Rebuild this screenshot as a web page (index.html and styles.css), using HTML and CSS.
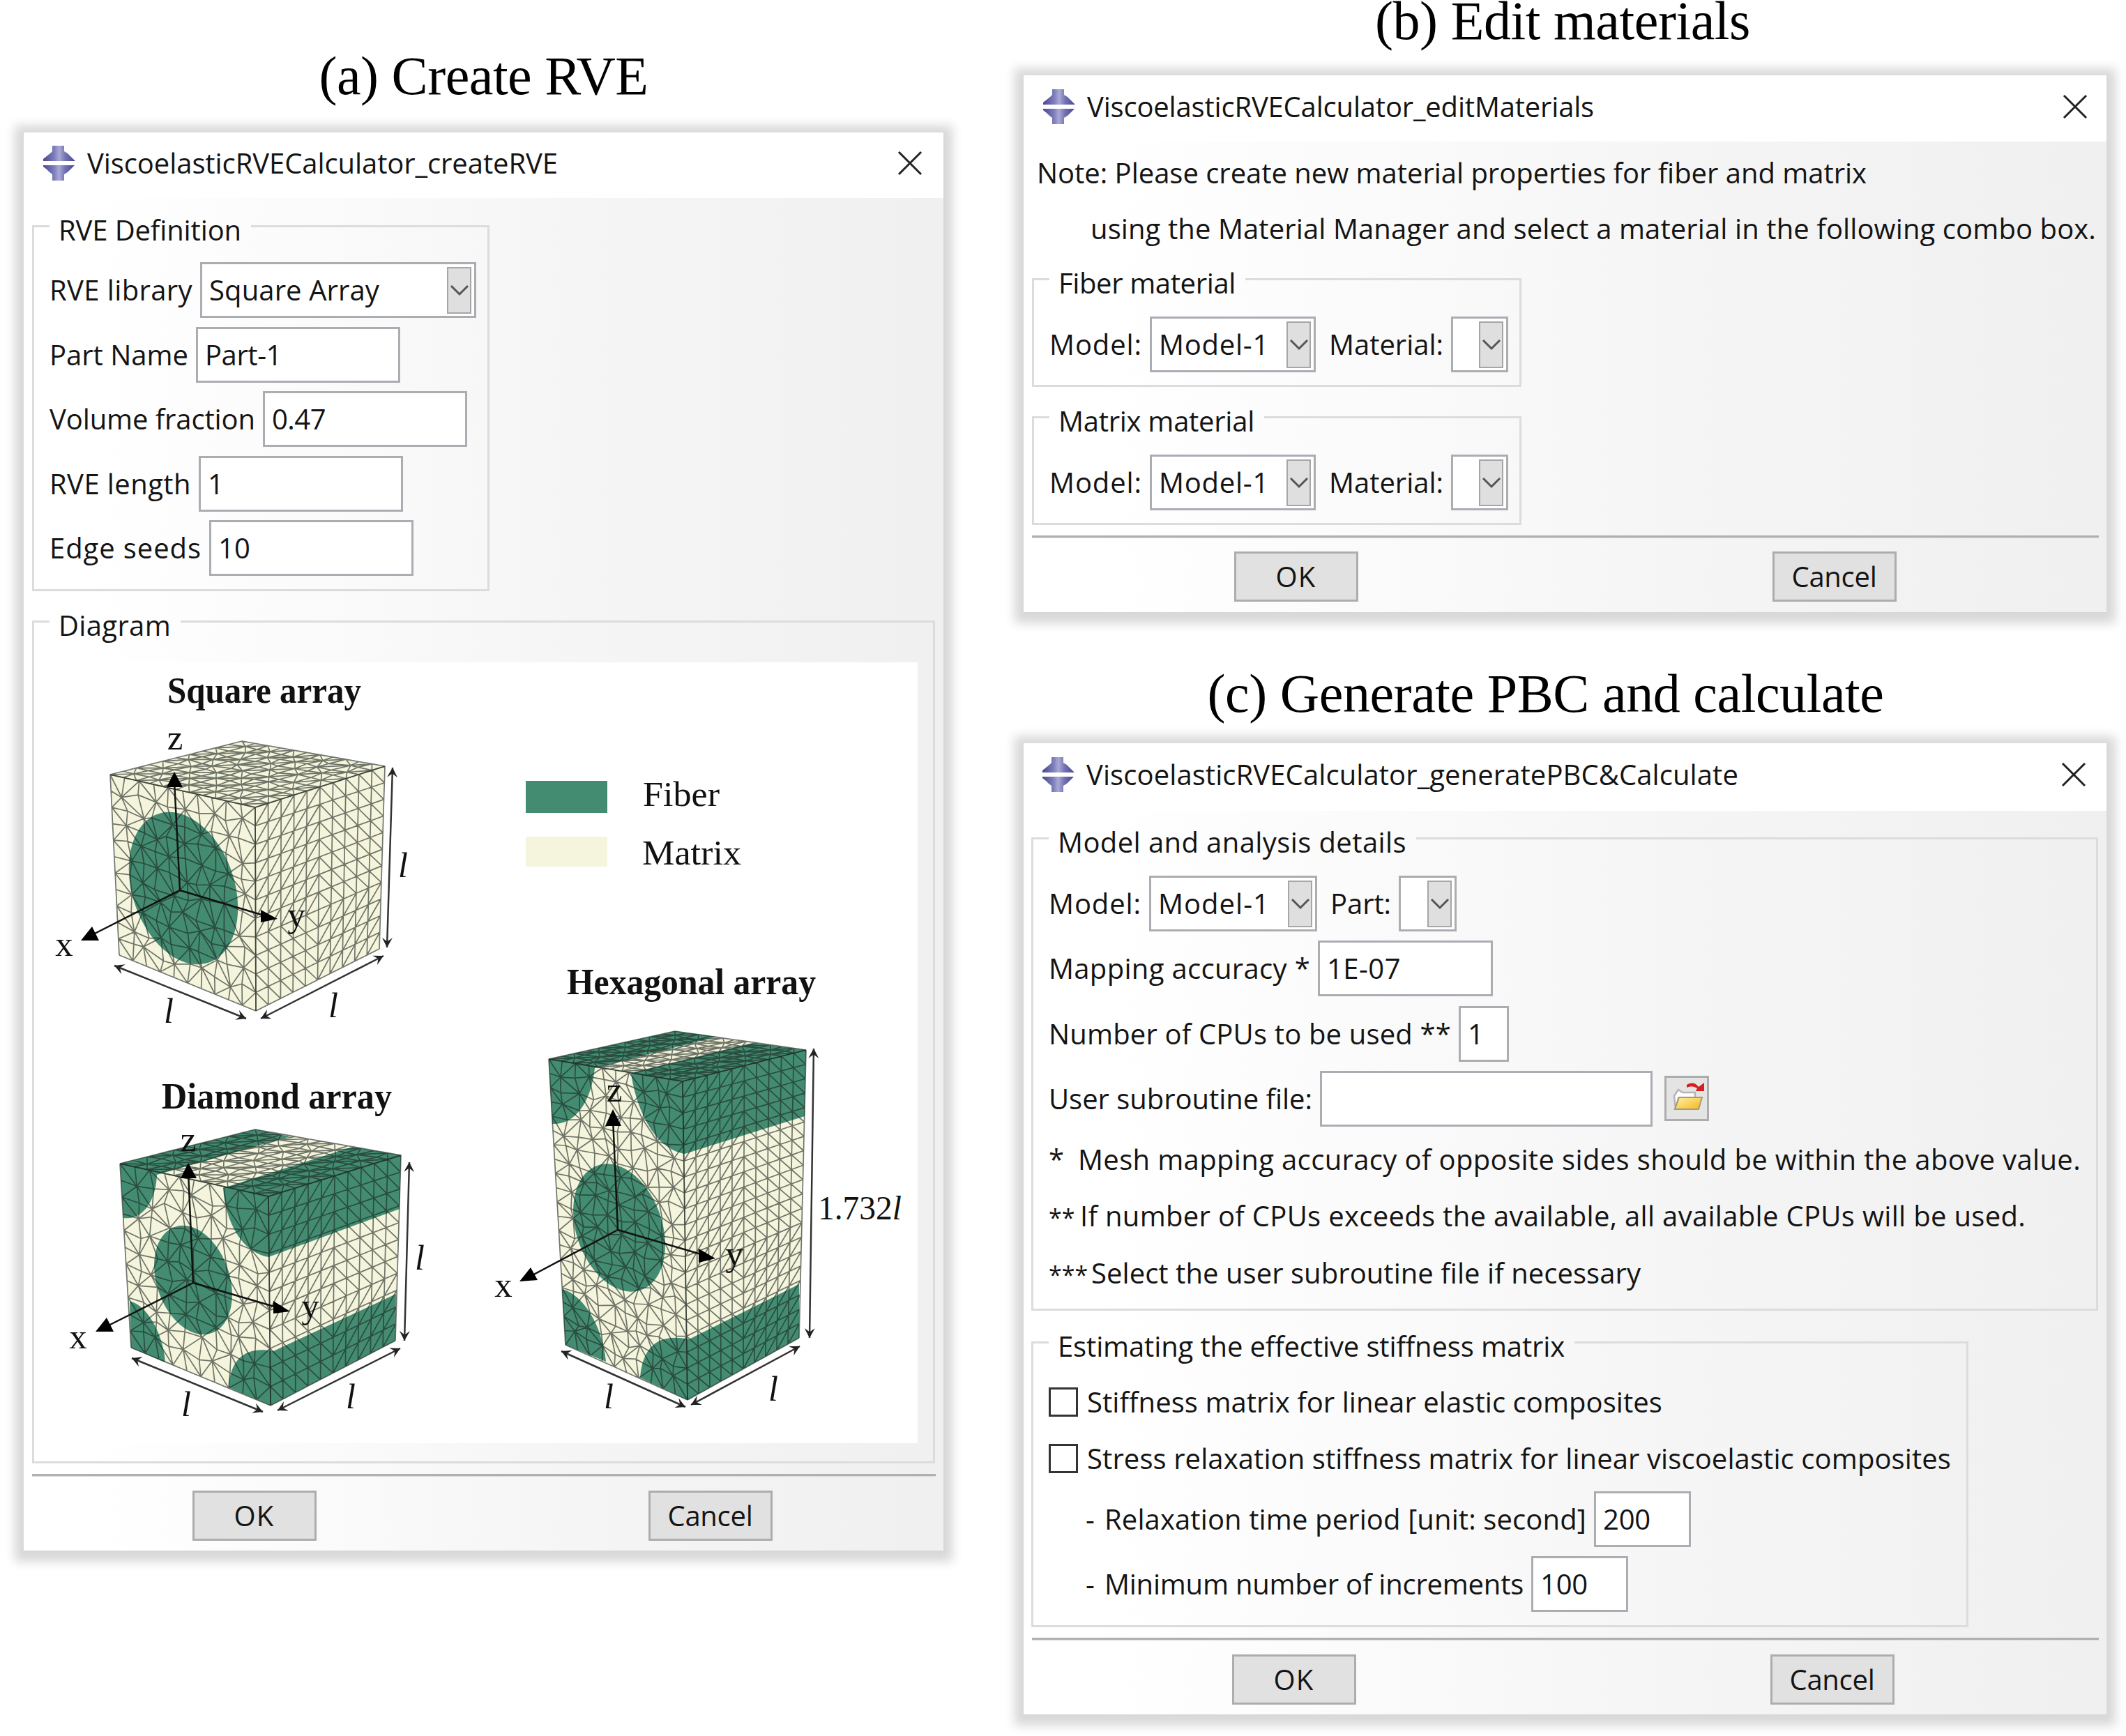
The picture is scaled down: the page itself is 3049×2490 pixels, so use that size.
FILE: index.html
```
<!DOCTYPE html>
<html lang="en">
<head>
<meta charset="utf-8">
<title>Viscoelastic RVE Calculator</title>
<link rel="stylesheet" href="styles.css">
</head>
<body>
<svg class="defs" width="0" height="0" aria-hidden="true">
  <defs>
    <linearGradient id="plum" x1="0" x2="1" y1="0" y2="0">
      <stop offset="0" stop-color="#4a4792"/><stop offset=".35" stop-color="#7f7fbc"/><stop offset=".5" stop-color="#a9a9d6"/><stop offset=".7" stop-color="#7271b2"/><stop offset="1" stop-color="#4a4792"/>
    </linearGradient>
    <linearGradient id="gold" x1="0" x2="1" y1="0" y2="1">
      <stop offset="0" stop-color="#fff0a8"/><stop offset="1" stop-color="#f2b81c"/>
    </linearGradient>
    <symbol id="logo" viewBox="0 0 48 50">
      <path d="M15 0h17v8l5 3 5 5 6 6H2v-3l5-4 5-4 3-3z" fill="url(#plum)"/>
      <path d="M2 28h45l-6 6-4 4-5 3v9H15v-9l-4-3-4-4-5-4z" fill="url(#plum)"/>
    </symbol>
    <symbol id="close" viewBox="0 0 36 36"><path d="M2 2l32 32M34 2L2 34" stroke="#222" stroke-width="3" fill="none"/></symbol>
    <symbol id="chev" viewBox="0 0 28 18"><path d="M2 3l12 12L26 3" stroke="#555" stroke-width="3" fill="none"/></symbol>
    <marker id="tip" viewBox="0 0 14 14" refX="13" refY="7" markerWidth="15" markerHeight="15" markerUnits="userSpaceOnUse" orient="auto-start-reverse"><path d="M0 0l13 7-13 7 5-7z" fill="#222"/></marker>
  </defs>
</svg>
<main class="page">
  <section class="col col-left">
    <h2 class="caption caption-a"><span data-w="472">(a) Create RVE</span></h2>
    <div class="dialog dialog-a">
      <header class="titlebar">
        <svg class="logo"><use href="#logo"/></svg><span class="title" data-w="675">ViscoelasticRVECalculator_createRVE</span>
        <svg class="close"><use href="#close"/></svg>
      </header>
      <fieldset class="group group-def">
        <legend><span data-w="262">RVE Definition</span></legend>
        <div class="row"><span data-w="205">RVE library</span><div class="combo combo-lib"><span data-w="244">Square Array</span><i class="drop"><svg><use href="#chev"/></svg></i></div></div>
        <div class="row"><span data-w="199">Part Name</span><div class="field w293"><span data-w="110">Part-1</span></div></div>
        <div class="row"><span data-w="295">Volume fraction</span><div class="field w293"><span data-w="77">0.47</span></div></div>
        <div class="row"><span data-w="203">RVE length</span><div class="field w293"><span>1</span></div></div>
        <div class="row"><span data-w="218">Edge seeds</span><div class="field w293"><span data-w="46">10</span></div></div>
      </fieldset>
      <fieldset class="group group-diagram">
        <legend><span data-w="161">Diagram</span></legend>
        <svg class="diagram" viewBox="50 950 1266 1120" width="1266" height="1120">
          <g class="heading">
            <text x="240" y="1008" textLength="278" lengthAdjust="spacingAndGlyphs">Square array</text>
            <text x="232" y="1590" textLength="330" lengthAdjust="spacingAndGlyphs">Diamond array</text>
            <text x="813" y="1426" textLength="357" lengthAdjust="spacingAndGlyphs">Hexagonal array</text>
          </g>
          <rect class="fiber" x="754" y="1120" width="117" height="46"/>
          <rect class="matrix" x="754" y="1200" width="117" height="43"/>
          <g class="key">
            <text x="922" y="1156" textLength="110" lengthAdjust="spacingAndGlyphs">Fiber</text>
            <text x="921" y="1240" textLength="142" lengthAdjust="spacingAndGlyphs">Matrix</text>
          </g>

          <!-- square array -->
          <path class="matrix" d="M158 1111L347 1063L552 1099L544 1361L367 1450L171 1370Z"/>
          <circle class="fiber" r=".387" transform="matrix(202 64 7 275 263 1274)"/>
          <g id="mesh-square" class="mesh"></g>
          <g class="axes">
            <path d="M258 1277L250 1120M258 1277L385 1315M258 1277L130 1342"/>
            <path class="head" d="M250 1107l12 22h-23zM398 1318l-24-13v18zM116 1349l16-20 10 20z"/>
          </g>
          <g class="dims"><path d="M164 1385L353 1461"/><path d="M374 1461L550 1371"/><path d="M563 1101L555 1359"/></g>
          <g class="lab"><text x="251" y="1075">z</text><text x="92" y="1371">x</text><text x="425" y="1329">y</text></g>
          <g class="len"><text x="242" y="1467">l</text><text x="478" y="1459">l</text><text x="578" y="1258">l</text></g>

          <!-- diamond array -->
          <path class="matrix" d="M172 1669L366 1620L575 1657L567 1923L388 2016L188 1933Z"/>
          <path class="fiber" d="M172 1669L366 1620L416 1630L225 1685C224 1720 206 1751 177 1747Z"/>
          <path class="fiber" d="M320 1704L505 1645L575 1657L573 1734L385 1803C345 1796 323 1750 320 1704Z"/>
          <path class="fiber" d="M186 1867C205 1868 233 1905 237 1954L188 1933Z"/>
          <path class="fiber" d="M328 1990C330 1950 352 1930 392 1938L568 1856L567 1923L388 2016Z"/>
          <circle class="fiber" r=".27" transform="matrix(207 65 9 282 277 1836)"/>
          <g id="mesh-diamond" class="mesh"></g>
          <g class="axes">
            <path d="M277 1840L270 1680M277 1840L400 1876M277 1840L152 1903"/>
            <path class="head" d="M270 1668l12 22h-23zM416 1881l-24-15v18zM137 1910l16-20 10 20z"/>
          </g>
          <g class="dims"><path d="M189 1948L377 2025"/><path d="M398 2023L574 1934"/><path d="M587 1667L580 1923"/></g>
          <g class="lab"><text x="270" y="1651">z</text><text x="112" y="1934">x</text><text x="445" y="1890">y</text></g>
          <g class="len"><text x="267" y="2031">l</text><text x="503" y="2020">l</text><text x="602" y="1821">l</text></g>

          <!-- hexagonal array -->
          <path class="matrix" d="M787 1519L968 1479L1156 1506L1146 1919L986 2008L811 1929Z"/>
          <path class="fiber" d="M787 1519L968 1479L1028 1487L853 1532C848 1580 825 1614 792 1612Z"/>
          <path class="fiber" d="M905 1539L1079 1496L1156 1506L1154 1601L982 1655C938 1648 912 1590 905 1539Z"/>
          <path class="fiber" d="M806 1849C835 1856 864 1900 869 1953L811 1929Z"/>
          <path class="fiber" d="M918 1976C922 1930 945 1912 988 1921L1146 1842L1146 1919L986 2008Z"/>
          <circle class="fiber" r=".358" transform="matrix(184 56 8.7 250 888 1761)"/>
          <g id="mesh-hex" class="mesh"></g>
          <g class="axes">
            <path d="M886 1764L879 1604M886 1764L1012 1801M886 1764L760 1831"/>
            <path class="head" d="M879 1591l12 24h-23zM1026 1805l-24-14v20zM745 1838l16-20 10 18z"/>
          </g>
          <g class="dims"><path d="M805 1938L983 2018"/><path d="M991 2015L1147 1931"/><path d="M1167 1504L1161 1919"/></g>
          <g class="lab"><text x="881" y="1580">z</text><text x="722" y="1860">x</text><text x="1053" y="1815">y</text></g>
          <g class="len"><text x="873" y="2020">l</text><text x="1109" y="2009">l</text></g>
          <text class="ratio" x="1173" y="1749" textLength="120" lengthAdjust="spacingAndGlyphs">1.732<tspan font-style="italic">l</tspan></text>
        </svg>
      </fieldset>
      <div class="rule"></div>
      <footer class="actions"><button><span data-w="58">OK</span></button><button><span data-w="122">Cancel</span></button></footer>
    </div>
  </section>

  <section class="col col-right">
    <h2 class="caption caption-b"><span data-w="538">(b) Edit materials</span></h2>
    <div class="dialog dialog-b">
      <header class="titlebar">
        <svg class="logo"><use href="#logo"/></svg><span class="title" data-w="727">ViscoelasticRVECalculator_editMaterials</span>
        <svg class="close"><use href="#close"/></svg>
      </header>
      <div class="note">
        <p><span data-w="1190">Note: Please create new material properties for fiber and matrix</span></p>
        <p class="indent"><span data-w="1442">using the Material Manager and select a material in the following combo box.</span></p>
      </div>
      <fieldset class="group group-mat">
        <legend><span data-w="254">Fiber material</span></legend>
        <div class="row"><span data-w="133">Model:</span><div class="combo combo-model"><span data-w="158">Model-1</span><i class="drop"><svg><use href="#chev"/></svg></i></div><span class="next" data-w="164">Material:</span><div class="combo combo-empty"><i class="drop"><svg><use href="#chev"/></svg></i></div></div>
      </fieldset>
      <fieldset class="group group-mat">
        <legend><span data-w="281">Matrix material</span></legend>
        <div class="row"><span data-w="133">Model:</span><div class="combo combo-model"><span data-w="158">Model-1</span><i class="drop"><svg><use href="#chev"/></svg></i></div><span class="next" data-w="164">Material:</span><div class="combo combo-empty"><i class="drop"><svg><use href="#chev"/></svg></i></div></div>
      </fieldset>
      <div class="rule"></div>
      <footer class="actions"><button><span data-w="58">OK</span></button><button><span data-w="122">Cancel</span></button></footer>
    </div>

    <h2 class="caption caption-c"><span data-w="970">(c) Generate PBC and calculate</span></h2>
    <div class="dialog dialog-c">
      <header class="titlebar">
        <svg class="logo"><use href="#logo"/></svg><span class="title" data-w="935">ViscoelasticRVECalculator_generatePBC&amp;Calculate</span>
        <svg class="close"><use href="#close"/></svg>
      </header>
      <fieldset class="group group-model">
        <legend><span data-w="500">Model and analysis details</span></legend>
        <div class="row"><span data-w="133">Model:</span><div class="combo combo-model"><span data-w="160">Model-1</span><i class="drop"><svg><use href="#chev"/></svg></i></div><span class="next" data-w="87">Part:</span><div class="combo combo-empty"><i class="drop"><svg><use href="#chev"/></svg></i></div></div>
        <div class="row"><span data-w="375">Mapping accuracy *</span><div class="field w250"><span data-w="106">1E-07</span></div></div>
        <div class="row"><span data-w="577">Number of CPUs to be used **</span><div class="field w71"><span>1</span></div></div>
        <div class="row"><span data-w="378">User subroutine file:</span><div class="field w477"></div>
          <div class="browse"><svg viewBox="0 0 58 58" width="58" height="58">
            <path d="M11 26l6-9 6 4h18v8H17l-4 16z" fill="#fff" stroke="#b5b5b5" stroke-width="2.5"/>
            <path d="M18 28h33l-5 17H12z" fill="url(#gold)" stroke="#a89a78" stroke-width="2"/>
            <path d="M29 10q10-6 17 3l8-6v12H42l2-4q-7-5-15-1z" fill="#d81e1e"/></svg></div>
        </div>
        <div class="foot">
          <p><span class="star">*</span><span data-w="1438">Mesh mapping accuracy of opposite sides should be within the above value.</span></p>
          <p><span class="stars stars-2">**</span><span data-w="1356">If number of CPUs exceeds the available, all available CPUs will be used.</span></p>
          <p><span class="stars stars-3">***</span><span data-w="788">Select the user subroutine file if necessary</span></p>
        </div>
      </fieldset>
      <fieldset class="group group-stiff">
        <legend><span data-w="727">Estimating the effective stiffness matrix</span></legend>
        <div class="check"><i class="box"></i><span data-w="825">Stiffness matrix for linear elastic composites</span></div>
        <div class="check"><i class="box"></i><span data-w="1239">Stress relaxation stiffness matrix for linear viscoelastic composites</span></div>
        <div class="sub row"><span class="dash">-</span><span data-w="691">Relaxation time period [unit: second]</span><div class="field w138"><span data-w="68">200</span></div></div>
        <div class="sub row"><span class="dash">-</span><span data-w="601">Minimum number of increments</span><div class="field w138"><span data-w="68">100</span></div></div>
      </fieldset>
      <div class="rule"></div>
      <footer class="actions"><button><span data-w="58">OK</span></button><button><span data-w="122">Cancel</span></button></footer>
    </div>
  </section>
</main>
<script src="app.js"></script>
</body>
</html>
```
FILE: styles.css
```
* { box-sizing: border-box; }
body { margin: 0; background: #fff; color: #141414; font: 40px/40px "Open Sans", "Noto Sans", sans-serif; font-variant-ligatures: none; }
.defs { display: block; }
.page { display: flex; width: 3049px; height: 2490px; padding-left: 34px; align-items: flex-start; }
.col { display: flex; flex-direction: column; }
.col-left { width: 1319px; margin-right: 115px; }
.col-right { width: 1553px; }
p { margin: 0; }
[data-w] { white-space: pre; flex: none; }

.caption { margin: 0; flex: none; text-align: center; font: 78px/58px "Liberation Serif", serif; color: #000; }
.caption span { display: inline-block; vertical-align: top; }
.caption-a { height: 190px; padding-top: 80px; }
.caption-b { height: 108px; padding-top: 1px; padding-right: 7px; }
.caption-c { height: 188px; padding: 88px 56px 0 0; }

.dialog { display: flex; flex-direction: column; flex: none; box-shadow: 0 3px 14px 13px #d8d8d8;
  background: linear-gradient(90deg, #fff 7%, #fbfbfb 30%, #f5f5f5 62%, #f0f0f0 98%); }
.dialog-a { height: 2034px; }
.dialog-b { height: 770px; }
.dialog-c { height: 1393px; }

.titlebar { display: flex; align-items: center; flex: none; height: 94px; padding: 0 30px 7px 26px; background: #fff; }
.dialog-b .titlebar { height: 95px; padding: 0 27px 5px 26px; }
.dialog-c .titlebar { height: 97px; padding: 0 29px 7px 25px; }
.logo { width: 48px; height: 50px; margin-right: 17px; }
.close { width: 36px; height: 36px; margin-left: auto; }

.group { flex: none; min-width: 0; margin: 0 0 0 12px; border: 3px solid #dcdcdc; padding: 0 0 0 22px; }
.group legend { padding: 12px 14px 0 13px; line-height: 40px; height: 52px; }
.group-def { width: 656px; height: 550px; margin-top: 14px; padding-top: 26px; }
.group-diagram { width: 1295px; height: 1234px; margin-top: 17px; padding-top: 33px; }
.group-mat { width: 702px; height: 181px; margin-top: 17px; padding-top: 28px; }
.note + .group-mat { margin-top: 7px; }
.group-model { width: 1530px; height: 704px; margin: 13px 0 0 11px; padding-top: 28px; }
.group-stiff { width: 1344px; height: 435px; margin: 19px 0 0 11px; padding-top: 20px; }

.row { display: flex; align-items: center; height: 80px; margin-bottom: 12.6px; gap: 11px; }
.dialog-c .row { margin-bottom: 13.3px; }
.next { margin-left: 8px; }
.field, .combo { display: flex; align-items: center; height: 80px; border: 3px solid #abadb3; background: #fff; padding-left: 10px; }
.combo { justify-content: space-between; padding-right: 4px; }
.combo-lib { width: 396px; }
.combo-model { width: 238px; }
.dialog-c .combo-model { width: 241px; }
.combo-empty { width: 82px; justify-content: flex-end; }
.dialog-c .combo-empty { width: 83px; }
.w293 { width: 293px; }
.w250 { width: 251px; }
.w71 { width: 72px; }
.w477 { width: 477px; }
.w138 { width: 139px; }
.drop { display: flex; align-items: center; justify-content: center; width: 35px; height: 67px; border: 2px solid #a6a6a6; background: #dfdfdf; }
.drop svg { width: 28px; height: 18px; }
.browse { width: 64px; height: 65px; margin-left: 6px; border: 3px solid #adadad; background: #e4e4e4; }
.browse svg { display: block; }

.note { flex: none; padding: 5px 0 0 19px; line-height: 80px; height: 164px; }
.indent { padding-left: 77px; }
.foot { line-height: 80.5px; margin-top: -6px; height: 240px; }
.star { display: inline-block; width: 42px; }
.stars { display: inline-block; font-size: 34px; }
.stars-2 { width: 45px; }
.stars-3 { width: 61px; }
.check { display: flex; align-items: center; height: 80.5px; gap: 13px; }
.box { width: 42px; height: 42px; border: 3px solid #333; background: #fff; }
.sub { padding-left: 53px; }
.dash { width: 16px; }
.check + .sub { margin-top: 7px; }

.rule { flex: none; height: 4px; margin: 15px 11px 0 12px; background: #b0b0b0; border-bottom: 1px solid #d8d8d8; }
.actions { display: flex; flex: none; margin: 20px 8px 0 4px; }
.dialog-b .actions { margin: 19px 6px 0 6px; }
.dialog-c .actions { margin: 20px 9px 0 3px; }
.actions::before, .actions::after { content: ""; flex: 1; }
.actions button { width: 178px; height: 72px; padding: 0; margin: 0; border: 3px solid #adadad; background: #e1e1e1; font: inherit; color: inherit; }
.actions button + button { margin-left: 476px; }
.dialog-b .actions button + button, .dialog-c .actions button + button { margin-left: 594px; }

.diagram { display: block; margin-left: -21px; background: #fff; font-family: "Liberation Serif", serif; fill: #111; }
.fiber { fill: #438c72; }
.matrix { fill: #f5f4dc; }
.heading { font-size: 52px; font-weight: 700; }
.key { font-size: 51px; }
.mesh path { fill: none; stroke: #1c2620; stroke-opacity: .62; stroke-width: 1.7; }
.axes path { fill: none; stroke: #111; stroke-width: 2.5; }
.axes .head { fill: #000; stroke: none; }
.dims path { fill: none; stroke: #333; stroke-width: 2.5; marker-start: url(#tip); marker-end: url(#tip); }
.lab { font-size: 51px; text-anchor: middle; }
.len { font-size: 50px; font-style: italic; text-anchor: middle; }
.ratio { font-size: 48px; }
```
FILE: app.js
```
// Spread each label over the width given in data-w.
document.querySelectorAll('[data-w]').forEach(el => {
  const natural = el.getBoundingClientRect().width;
  el.style.letterSpacing = ((+el.dataset.w - natural) / el.textContent.length).toFixed(3) + 'px';
});

let seed = 7;
const rand = () => (seed = (seed * 16807) % 2147483647) / 2147483647;

// Triangulated grid over the quad a-b-c-d (a-b is the top edge, d-c the bottom edge).
function mesh(id, [a, b, c, d], nx, ny, jitter) {
  const pts = [];
  for (let j = 0; j <= ny; j++) {
    pts.push([]);
    for (let i = 0; i <= nx; i++) {
      const inner = i > 0 && i < nx && j > 0 && j < ny;
      const u = (i + (inner ? (rand() - .5) * jitter : 0)) / nx;
      const v = (j + (inner ? (rand() - .5) * jitter : 0)) / ny;
      pts[j].push([0, 1].map(k => (1 - v) * ((1 - u) * a[k] + u * b[k]) + v * ((1 - u) * d[k] + u * c[k])));
    }
  }
  const seg = (p, q) => `M${p[0].toFixed(1)} ${p[1].toFixed(1)}L${q[0].toFixed(1)} ${q[1].toFixed(1)}`;
  let path = '';
  for (let j = 0; j <= ny; j++) for (let i = 0; i <= nx; i++) {
    if (i < nx) path += seg(pts[j][i], pts[j][i + 1]);
    if (j < ny) path += seg(pts[j][i], pts[j + 1][i]);
    if (i < nx && j < ny) {
      const down = jitter ? (i + j) % 2 === 0 : i >= nx / 2 ? j < ny * .6 : j > ny * .6;
      path += down ? seg(pts[j][i], pts[j + 1][i + 1]) : seg(pts[j][i + 1], pts[j + 1][i]);
    }
  }
  const el = document.createElementNS('http://www.w3.org/2000/svg', 'path');
  el.setAttribute('d', path);
  document.getElementById(id).append(el);
}

function prism(id, tl, back, tr, tf, bl, bf, br, rows) {
  mesh(id, [tl, tf, bf, bl], 10, rows, .55);
  mesh(id, [tf, tr, br, bf], 10, rows, 0);
  mesh(id, [back, tr, tf, tl], 11, 10, .4);
}

prism('mesh-square', [158, 1111], [347, 1063], [552, 1099], [366, 1158], [171, 1370], [367, 1450], [544, 1361], 11);
prism('mesh-diamond', [172, 1669], [366, 1620], [575, 1657], [385, 1716], [188, 1933], [388, 2016], [567, 1923], 11);
prism('mesh-hex', [787, 1519], [968, 1479], [1156, 1506], [979, 1551], [811, 1929], [986, 2008], [1146, 1919], 20);
```
